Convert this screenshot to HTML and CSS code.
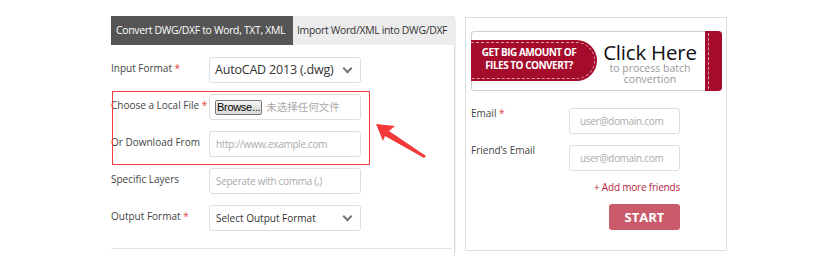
FILE: index.html
```html
<!DOCTYPE html>
<html lang="en">
<head>
    <meta charset="UTF-8">
    <title>DWG/DXF Converter</title>
    <link rel="stylesheet" href="styles.css">
</head>
<body>
    <div class="page">
        <div class="converter">
            <div class="tabs">
                <div class="tab active">Convert DWG/DXF to Word, TXT, XML</div>
                <div class="tab">Import Word/XML into DWG/DXF</div>
            </div>
            <div class="form">
                <div class="row">
                    <div class="label">Input Format <span class="req">*</span></div>
                    <div class="field select big">AutoCAD 2013 (.dwg)<span class="chevron"></span></div>
                </div>
                <div class="row">
                    <div class="label">Choose a Local File <span class="req">*</span></div>
                    <div class="field file"><span class="browse">Browse...</span><span class="nofile">未选择任何文件</span></div>
                </div>
                <div class="row">
                    <div class="label">Or Download From</div>
                    <div class="field placeholder">http://www.example.com</div>
                </div>
                <div class="row">
                    <div class="label">Specific Layers</div>
                    <div class="field placeholder">Seperate with comma (,)</div>
                </div>
                <div class="row">
                    <div class="label">Output Format <span class="req">*</span></div>
                    <div class="field select">Select Output Format<span class="chevron"></span></div>
                </div>
                <div class="divider"></div>
            </div>

            <!-- annotation over the form -->
            <div class="highlight"></div>
            <svg class="arrow" width="56" height="40" viewBox="0 0 56 40">
                <polygon points="1,1 20,3 14,8 51,33 49,35 10,13 8,18" fill="#f23a3a"/>
            </svg>
        </div>

        <div class="batch">
            <div class="banner">
                <div class="ribbon">GET BIG AMOUNT OF<br>FILES TO CONVERT?</div>
                <div class="click">
                    <div class="click-title">Click Here</div>
                    <div class="click-sub">to process batch<br>convertion</div>
                </div>
                <div class="strip"></div>
            </div>
            <div class="row">
                <div class="label">Email <span class="req">*</span></div>
                <div class="field placeholder small">user@domain.com</div>
            </div>
            <div class="row">
                <div class="label">Friend’s Email</div>
                <div class="field placeholder small">user@domain.com</div>
            </div>
            <div class="more">+ Add more friends</div>
            <div class="actions">
                <div class="start">START</div>
            </div>
        </div>
    </div>
</body>
</html>
```

FILE: styles.css
```css
* {
    margin: 0;
    padding: 0;
    box-sizing: border-box;
}

body {
    font-family: 'Open Sans', 'Noto Sans CJK SC', sans-serif;
    background-color: #ffffff;
    color: #444;
    width: 840px;
    height: 268px;
    overflow: hidden;
}

.page {
    display: flex;
    padding: 16px 0 0 111px;
}

.converter {
    position: relative;
    width: 344px;
    height: 240px;
    border-right: 1px solid #dcdcdc;
    box-shadow: 5px 0 0 -4px #f0f0f0;
}

.tabs {
    display: flex;
    height: 29px;
    background-color: #ececec;
    margin-right: -1px;
}

.tab {
    font-size: 10.4px;
    line-height: 29px;
    padding: 0 4px;
    color: #333;
    letter-spacing: -0.3px;
    white-space: nowrap;
}

.tab.active {
    background-color: #555;
    color: #fff;
    width: 182px;
    padding-left: 5px;
}

.form {
    padding-top: 12px;
}

.row {
    display: flex;
    margin-bottom: 11px;
}

.label {
    width: 98px;
    flex-shrink: 0;
    font-size: 10px;
    line-height: 16px;
    padding-top: 3px;
    color: #444;
}

.req {
    color: #e23b3b;
}

.field {
    position: relative;
    width: 152px;
    height: 26px;
    border: 1px solid #dedede;
    border-radius: 3px;
    font-size: 10px;
    line-height: 24px;
    padding: 0 6px;
    color: #333;
    white-space: nowrap;
}

.field.big {
    font-size: 12.5px;
    letter-spacing: -0.2px;
    padding-left: 5px;
}

.field.small {
    width: 111px;
    padding-left: 10px;
}

.placeholder {
    color: #aaa;
    letter-spacing: -0.3px;
}

.chevron {
    position: absolute;
    right: 9px;
    top: 7px;
    width: 7px;
    height: 7px;
    border-right: 2px solid #777;
    border-bottom: 2px solid #777;
    transform: rotate(45deg);
}

.file {
    display: flex;
    align-items: center;
    padding-left: 5px;
}

.browse {
    font-family: 'Liberation Sans', sans-serif;
    font-size: 11px;
    line-height: 13px;
    color: #000;
    padding: 0 1px;
    border: 1px solid #777;
    border-radius: 2px;
    background: linear-gradient(#f4f4f4, #d8d8d8);
    margin-right: 4px;
    letter-spacing: -0.3px;
}

.nofile {
    font-size: 10.5px;
    color: #aaa;
}

.divider {
    height: 1px;
    background-color: #e4e4e4;
    margin: 17px 2px 0 0;
}

.highlight {
    position: absolute;
    left: 1px;
    top: 75px;
    width: 258px;
    height: 74px;
    border: 1.5px solid #f23a3a;
}

.arrow {
    position: absolute;
    left: 264px;
    top: 107px;
}

.batch {
    width: 262px;
    height: 234px;
    margin: 1px 0 0 10px;
    border: 1px solid #dcdcdc;
    padding: 13px 4px 0 5px;
}

.batch .label {
    padding-top: 0;
    margin-top: -3px;
}

.banner {
    position: relative;
    display: flex;
    height: 60px;
    border: 1px solid #cfcfcf;
    border-radius: 3px;
    margin-bottom: 17px;
}

.ribbon {
    position: relative;
    width: 126px;
    height: 41px;
    margin: 8px 0 0 -1px;
    background-color: #a50b2b;
    border-radius: 0 21px 21px 0;
    color: #fff;
    font-size: 10px;
    font-weight: bold;
    line-height: 12.5px;
    letter-spacing: -0.5px;
    text-align: center;
    padding: 6px 10px 0 0;
}

.ribbon::before {
    content: "";
    position: absolute;
    top: 2px;
    bottom: 2px;
    left: 0;
    right: 2px;
    border: 1px dashed rgba(255, 255, 255, 0.6);
    border-left: none;
    border-radius: 0 19px 19px 0;
}

.click {
    width: 102px;
    text-align: center;
    padding: 9px 0 0 4px;
}

.click-title {
    font-size: 20.5px;
    line-height: 22px;
    color: #111;
    letter-spacing: -0.2px;
}

.click-sub {
    font-size: 10.5px;
    line-height: 10.5px;
    color: #999;
}

.strip {
    position: absolute;
    right: -1px;
    top: -1px;
    bottom: -1px;
    width: 17px;
    background-color: #a50b2b;
    border-radius: 0 4px 4px 0;
}

.strip::before {
    content: "";
    position: absolute;
    left: 3px;
    top: 2px;
    bottom: 2px;
    border-left: 1px dashed rgba(255, 255, 255, 0.6);
}

.more {
    width: 209px;
    text-align: right;
    font-size: 10px;
    line-height: 16px;
    color: #b8243c;
    letter-spacing: -0.2px;
    margin-top: -3px;
}

.actions {
    display: flex;
    justify-content: flex-end;
    width: 209px;
    margin-top: 9px;
}

.start {
    width: 71px;
    height: 26px;
    background-color: #c95b6a;
    border-radius: 3px;
    color: #fff;
    font-size: 13px;
    font-weight: bold;
    line-height: 26px;
    text-align: center;
}
```
